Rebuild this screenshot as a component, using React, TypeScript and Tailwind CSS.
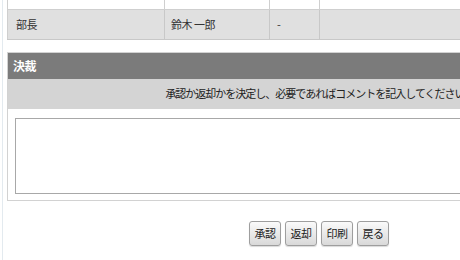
export default function App() {
  const buttons = ['承認', '返却', '印刷', '戻る'];

  return (
    <div
      className="relative w-[460px] h-[260px] overflow-hidden bg-white text-[11px] tracking-[-0.5px] text-[#333]"
      style={{ fontFamily: '"Noto Sans CJK JP", "Liberation Sans", sans-serif' }}
    >
      {/* faint page edge */}
      <div className="absolute left-[2px] top-0 h-full w-px bg-[#e3eaef]" />

      <div className="ml-[7px] w-[626px]">
        {/* approvers table (tail end) */}
        <table className="w-full border-collapse border-l border-[#cfcfcf]">
          <tbody>
            <tr className="h-[9px] bg-white">
              <td className="w-[157px] border-r border-b border-[#cfcfcf]" />
              <td className="w-[105px] border-r border-b border-[#cfcfcf]" />
              <td className="w-[50px] border-r border-b border-[#cfcfcf]" />
              <td className="border-b border-[#cfcfcf]" />
            </tr>
            <tr className="h-[30px] bg-[#e0e0e0]">
              <td className="border-r border-b border-[#c8c8c8] pl-[8px]">部長</td>
              <td className="border-r border-b border-[#c8c8c8] pl-[6px]">鈴木 一郎</td>
              <td className="border-r border-b border-[#c8c8c8] pl-[7px]">-</td>
              <td className="border-b border-[#c8c8c8]" />
            </tr>
          </tbody>
        </table>

        {/* decision panel */}
        <div className="mt-[12px] border border-[#d2d2d2]">
          <div className="h-[26px] bg-[#7b7b7b] pl-[5px] flex items-center text-[12px] text-white font-bold">
            決裁
          </div>
          <div className="h-[30px] bg-[#d4d4d4] flex items-center justify-center tracking-[-1px] text-[#222]">
            承認か返却かを決定し、必要であればコメントを記入してください。
          </div>
          <div className="pt-[9px] pb-[6px] px-[7px]">
            <textarea className="block w-full h-[76px] border border-[#a8a8a8] resize-none outline-none" />
          </div>
        </div>

        {/* actions */}
        <div className="mt-[20px] flex justify-center gap-[4px] pr-[2px]">
          {buttons.map((label) => (
            <button
              key={label}
              className="h-[25px] w-[32px] rounded-[3px] border border-[#9e9e9e] bg-gradient-to-b from-[#fafafa] to-[#d9d9d9] text-[11px] tracking-[-0.5px] text-[#222] shadow-[0_1px_1px_rgba(0,0,0,0.15)]"
            >
              {label}
            </button>
          ))}
        </div>
      </div>
    </div>
  );
}
